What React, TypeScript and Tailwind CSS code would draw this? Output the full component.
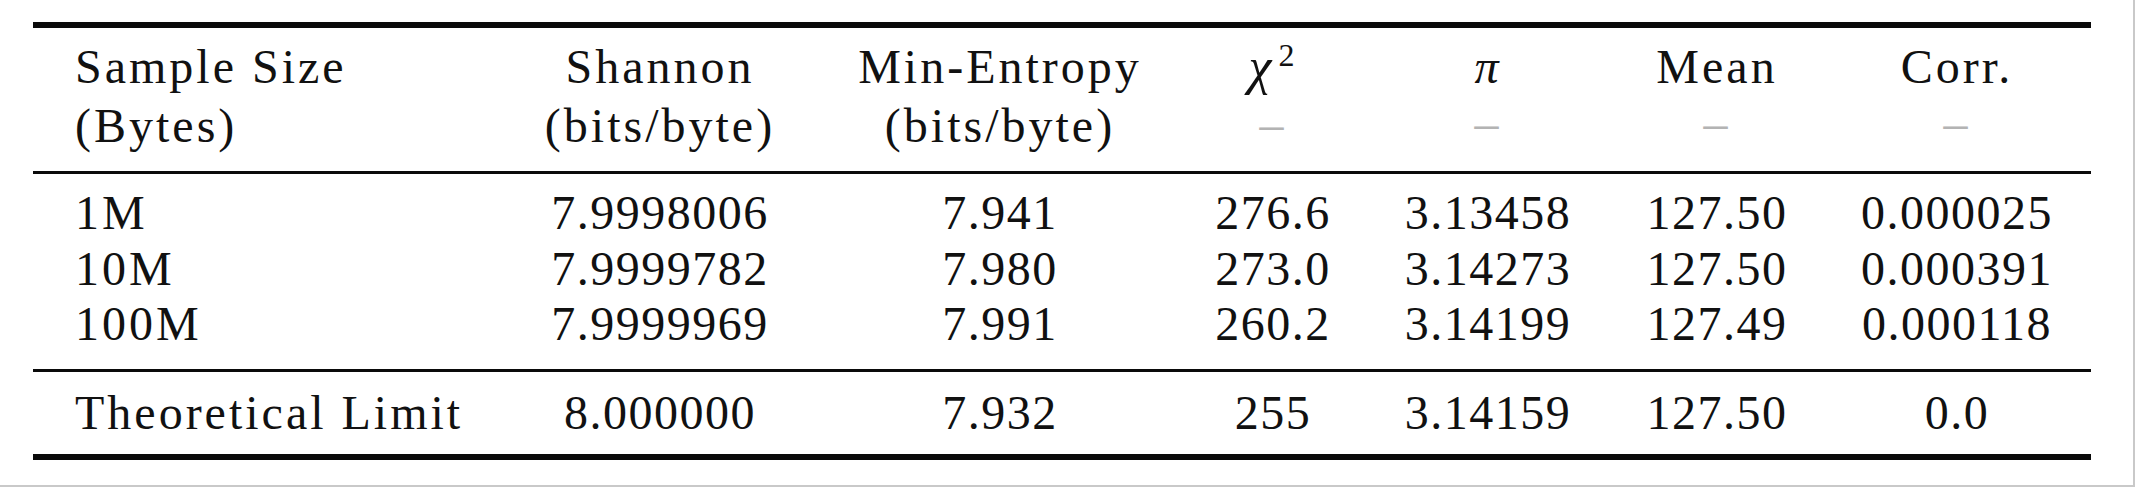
import React from 'react'

const COLS = 'grid grid-cols-[500px_254px_426px_120px_310px_148px_332px]'

const rows = [
  ['1M', '7.9998006', '7.941', '276.6', '3.13458', '127.50', '0.000025'],
  ['10M', '7.9999782', '7.980', '273.0', '3.14273', '127.50', '0.000391'],
  ['100M', '7.9999969', '7.991', '260.2', '3.14199', '127.49', '0.000118'],
]

const limit = ['Theoretical Limit', '8.000000', '7.932', '255', '3.14159', '127.50', '0.0']

const Dash = () => <span className="relative -top-[3px] text-[#b3b3b3]">–</span>

const HeadCell = ({ top, bottom, first }: { top: React.ReactNode; bottom: React.ReactNode; first?: boolean }) => (
  <div className={first ? 'flex flex-col items-start pl-[42px]' : 'flex flex-col items-center'}>
    <div className="whitespace-nowrap leading-[59px]">{top}</div>
    <div className="whitespace-nowrap leading-[59px]">{bottom}</div>
  </div>
)

const Row = ({ cells }: { cells: string[] }) => (
  <div className={COLS}>
    {cells.map((c, i) =>
      i === 0 ? (
        <div key={i} className="whitespace-nowrap pl-[42px] leading-[55.5px] tracking-[3px]">
          {c}
        </div>
      ) : (
        <div key={i} className="flex justify-center whitespace-nowrap leading-[55.5px] tracking-[1.5px]">
          {c}
        </div>
      ),
    )}
  </div>
)

const App = () => {
  return (
    <div className="h-[488px] w-[2138px] bg-white">
      <div
        className="h-[487px] w-[2135px] border-b-2 border-r-2 border-[#c9c9c9] pl-[33px] pt-[22px] text-[48px] text-[#111111]"
        style={{ fontFamily: '"Liberation Serif", "Times New Roman", serif' }}
      >
        <div className="w-[2058px]">
          <div className="h-[6px] bg-[#0a0a0a]" />

          {/* header */}
          <div className={`${COLS} pb-[15px] pt-[9px] tracking-[3px]`}>
            <HeadCell first top="Sample Size" bottom="(Bytes)" />
            <HeadCell top="Shannon" bottom="(bits/byte)" />
            <HeadCell top="Min-Entropy" bottom="(bits/byte)" />
            <HeadCell
              top={
                <span className="text-[52px] italic">
                  χ<span className="relative -top-[18px] ml-[4px] text-[32px] not-italic leading-none">2</span>
                </span>
              }
              bottom={<Dash />}
            />
            <HeadCell top={<span className="italic">π</span>} bottom={<Dash />} />
            <HeadCell top="Mean" bottom={<Dash />} />
            <HeadCell top="Corr." bottom={<Dash />} />
          </div>

          <div className="h-[3px] bg-[#0a0a0a]" />

          <div className="pb-[17.5px] pt-[11px]">
            {rows.map((r) => (
              <Row key={r[0]} cells={r} />
            ))}
          </div>

          <div className="h-[3px] bg-[#0a0a0a]" />

          <div className="pb-[13.5px] pt-[13px]">
            <Row cells={limit} />
          </div>

          <div className="h-[6px] bg-[#0a0a0a]" />
        </div>
      </div>
    </div>
  )
}

export default App
